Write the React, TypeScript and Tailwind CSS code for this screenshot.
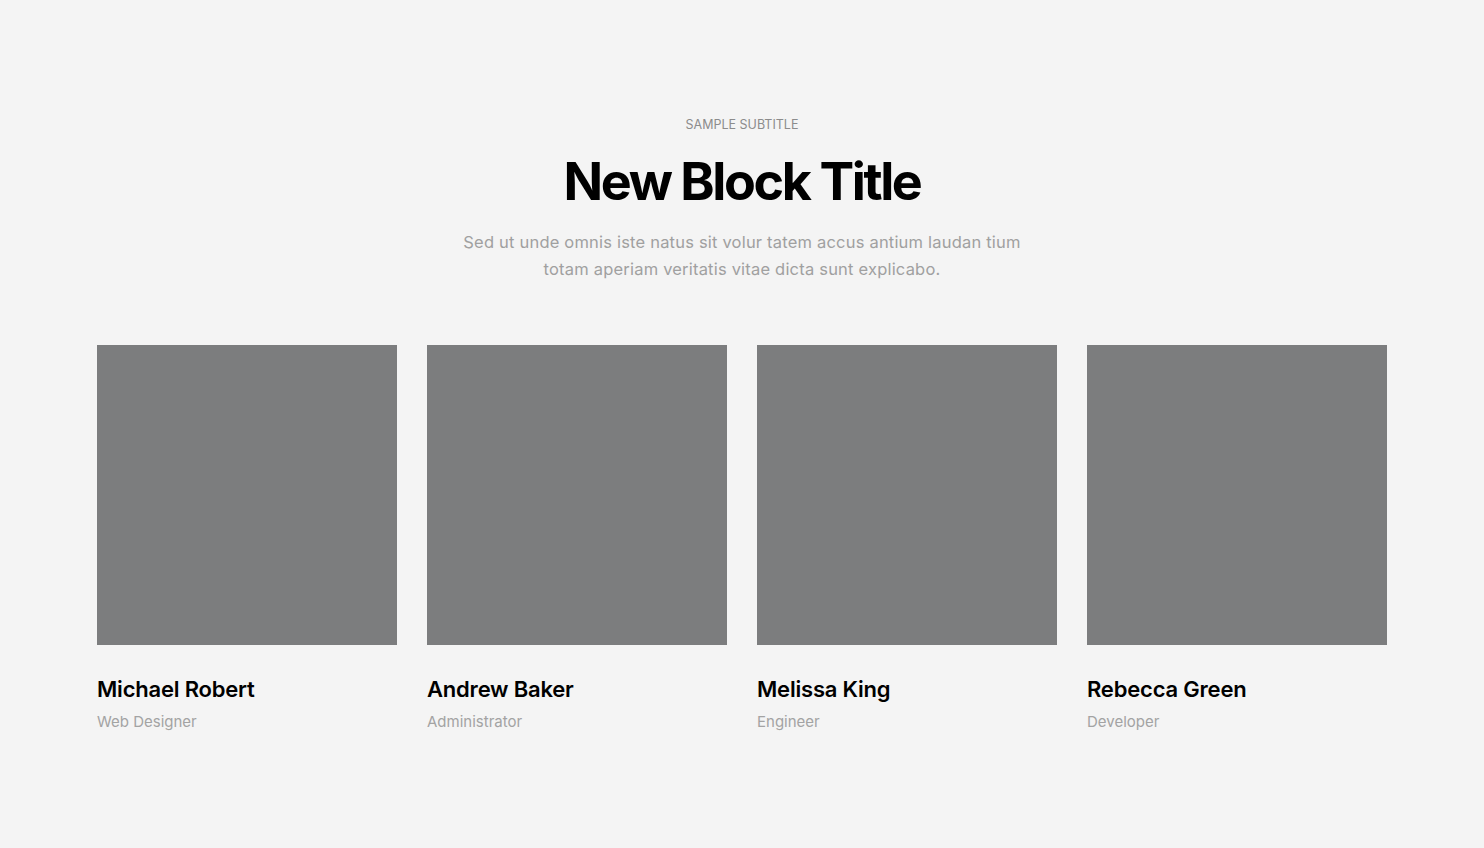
import React from "react";

type Member = {
  name: string;
  role: string;
};

const members: Member[] = [
  { name: "Michael Robert", role: "Web Designer" },
  { name: "Andrew Baker", role: "Administrator" },
  { name: "Melissa King", role: "Engineer" },
  { name: "Rebecca Green", role: "Developer" },
];

const TeamCard: React.FC<{ member: Member }> = ({ member }) => {
  return (
    <div className="flex flex-col">
      <div className="w-full aspect-square bg-[#7c7d7e]" />
      <h3 className="mt-[30px] text-[22px] leading-[28px] font-semibold text-black tracking-[-0.2px]">
        {member.name}
      </h3>
      <p className="mt-[8px] text-[15px] leading-[22px] text-[#a3a3a3]">
        {member.role}
      </p>
    </div>
  );
};

const App: React.FC = () => {
  return (
    <div
      className="min-h-screen w-full bg-[#f4f4f4] pt-[117px] pb-[100px]"
      style={{ fontFamily: "Inter, 'Noto Sans', sans-serif" }}
    >
      <div className="flex flex-col items-center text-center">
        <p className="text-[12.5px] leading-[16px] uppercase text-[#8c8c8c]">
          Sample Subtitle
        </p>
        <h1 className="mt-[19px] text-[52px] leading-[60px] font-bold text-black tracking-[-2.4px]">
          New Block Title
        </h1>
        <p className="mt-[17px] max-w-[586px] text-[16.5px] leading-[27px] text-[#a0a0a0] tracking-[0.2px]">
          Sed ut unde omnis iste natus sit volur tatem accus antium laudan tium
          totam aperiam veritatis vitae dicta sunt explicabo.
        </p>
      </div>
      <div className="mx-auto mt-[62px] w-[1290px] grid grid-cols-4 gap-[30px]">
        {members.map((m) => (
          <TeamCard key={m.name} member={m} />
        ))}
      </div>
    </div>
  );
};

export default App;
